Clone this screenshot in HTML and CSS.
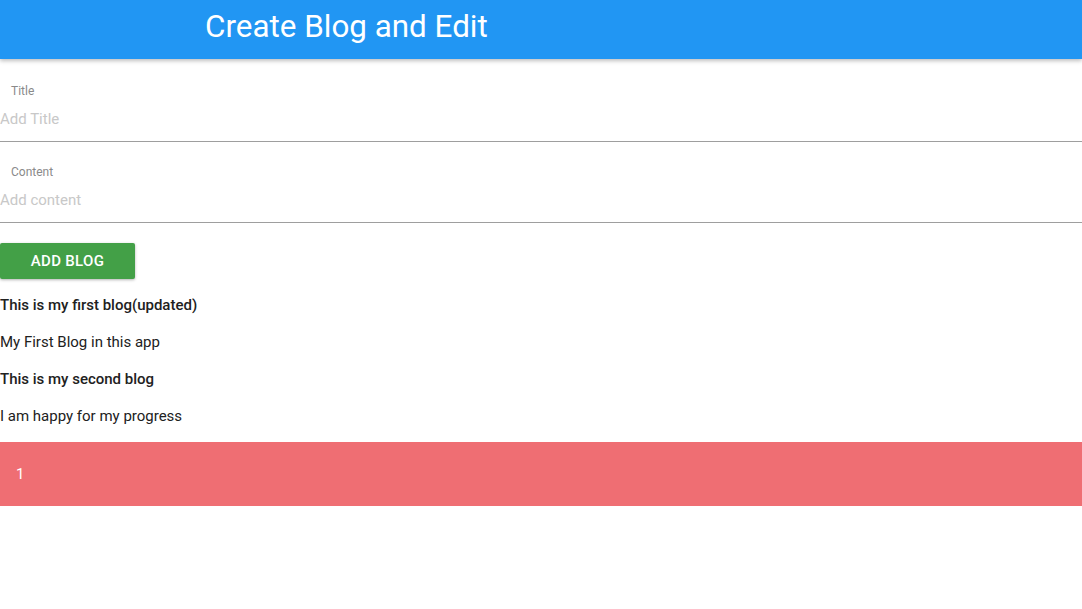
FILE: index.html
```html
<!DOCTYPE html>
<html>
<head>
<meta charset="utf-8">
<link rel="stylesheet" href="styles.css">
</head>
<body>
<header class="appbar"><h1 class="appbar-title">Create Blog and Edit</h1></header>
<main class="page">
  <form class="form">
    <label class="field field-first">
      <span class="field-label">Title</span>
      <input class="field-input" type="text" placeholder="Add Title">
    </label>
    <label class="field">
      <span class="field-label">Content</span>
      <input class="field-input" type="text" placeholder="Add content">
    </label>
    <button class="btn" type="button">Add Blog</button>
  </form>
  <section class="blogs">
    <p class="blog-title">This is my first blog(updated)</p>
    <p class="blog-body">My First Blog in this app</p>
    <p class="blog-title">This is my second blog</p>
    <p class="blog-body">I am happy for my progress</p>
  </section>
  <div class="counter">1</div>
</main>
</body>
</html>
```
FILE: styles.css
```css
* { box-sizing: border-box; }
body {
  margin: 0;
  font-family: Roboto, "Noto Sans", sans-serif;
  background: #fff;
  color: #212121;
}
.appbar {
  height: 59px;
  background: #2196f3;
  box-shadow: 0 2px 4px rgba(0,0,0,0.25);
  display: flex;
  align-items: center;
  padding-left: 205px;
  padding-bottom: 5px;
  position: relative;
  z-index: 1;
}
.appbar-title {
  margin: 0;
  font-size: 31.4px;
  font-weight: 400;
  color: #fff;
  line-height: 40px;
}
.form { display: flex; flex-direction: column; }
.field {
  display: flex;
  flex-direction: column;
  padding-top: 23px;
  border-bottom: 1px solid #9e9e9e;
}
.field-first { padding-top: 25px; }
.field-label {
  font-size: 12px;
  line-height: 14px;
  color: #8a8a8a;
  padding-left: 11px;
}
.field-input {
  border: none;
  outline: none;
  padding: 0;
  margin: 11px 0 12px;
  height: 20px;
  font-family: inherit;
  font-size: 15px;
  color: #212121;
  background: transparent;
}
.field-input::placeholder { color: #c8c8c8; }
.btn {
  align-self: flex-start;
  margin-top: 20px;
  width: 135px;
  height: 36px;
  border: none;
  border-radius: 2px;
  background: #43a047;
  color: #fff;
  font-family: inherit;
  font-size: 15px;
  font-weight: 500;
  letter-spacing: 0.3px;
  text-transform: uppercase;
  box-shadow: 0 1px 3px rgba(0,0,0,0.3);
}
.blogs p {
  margin: 15px 0 0;
  font-size: 15px;
  line-height: 22px;
}
.blog-title { font-weight: 500; }
.counter {
  margin-top: 15px;
  height: 64px;
  background: #ef6e73;
  color: #fff;
  font-size: 15px;
  display: flex;
  align-items: center;
  padding-left: 16px;
  box-shadow: 0 2px 2px rgba(0,0,0,0.35);
}
```
